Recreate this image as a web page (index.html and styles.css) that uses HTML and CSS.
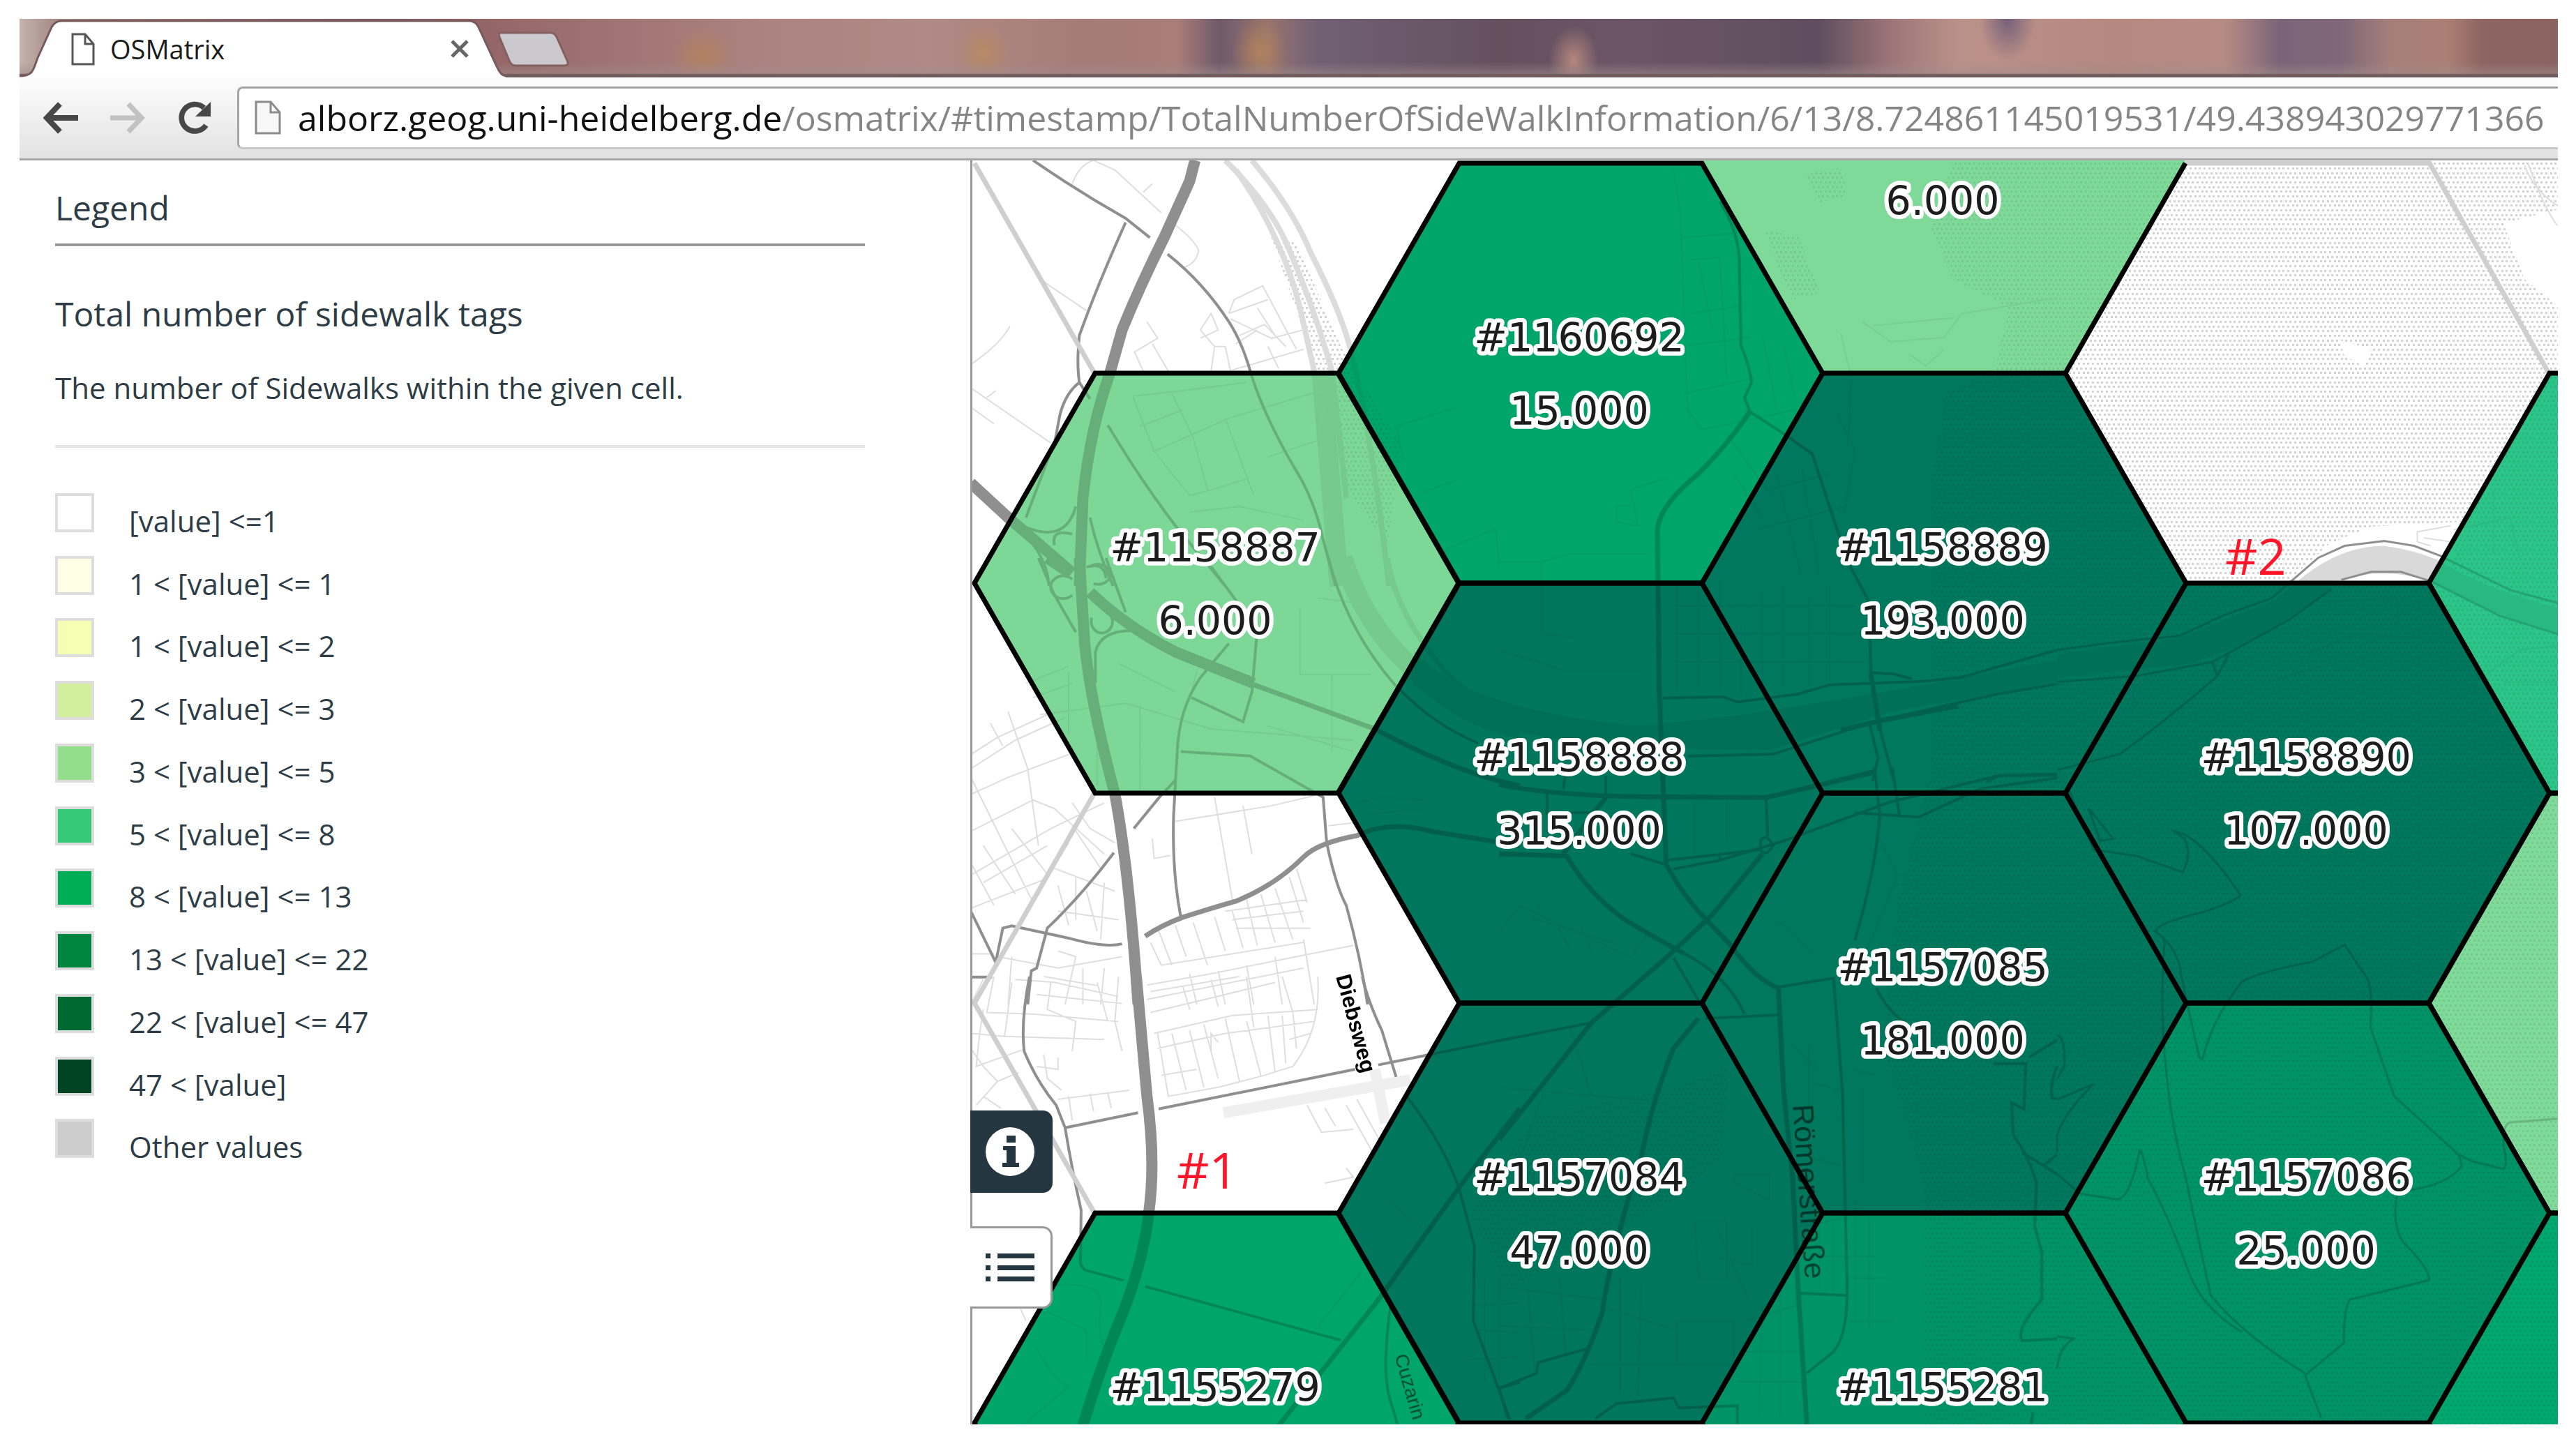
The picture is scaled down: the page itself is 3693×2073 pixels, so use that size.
FILE: index.html
```html
<!DOCTYPE html>
<html lang="en">
<head>
<meta charset="utf-8">
<title>OSMatrix</title>
<link rel="stylesheet" href="styles.css">
</head>
<body>
<div class="window">
  <header class="browser">
    <div class="tabstrip">
      <div class="tab">
        <svg class="tab-shape" viewBox="0 0 697 84" preserveAspectRatio="none" aria-hidden="true"><path d="M0 84V82C20 82 20 72 26 56L46 12Q51 3 60 3H644Q654 3 658 12L684 68Q690 82 697 82V84Z" fill="#fff"/><path d="M0 82C20 82 20 72 26 56L46 12Q51 3 60 3H644Q654 3 658 12L684 68Q690 82 697 82" fill="none" stroke="#775a5c" stroke-width="3"/></svg>
        <svg class="icon-page" viewBox="0 0 34 47" aria-hidden="true"><path d="M2 2H20L32 16V45H2ZM20 2V16H32" fill="#fff" stroke="#555" stroke-width="3"/></svg>
        <span class="tab-title">OSMatrix</span>
        <button class="tab-close" aria-label="Close tab"><svg viewBox="0 0 28 28"><path d="M3 3L25 25M25 3L3 25" stroke="#666" stroke-width="5"/></svg></button>
      </div>
      <button class="new-tab" aria-label="New tab"><svg viewBox="0 0 104 52"><path d="M5 2H76Q82 2 85 8L101 44Q102 49 96 49H26Q21 49 18 44L3 8Q1 2 5 2Z" fill="#cbc9cd" stroke="#83605f" stroke-width="3"/></svg></button>
    </div>
    <div class="toolbar">
      <button class="nav" aria-label="Back"><svg viewBox="0 0 50 44"><path d="M24 2L5 22L24 42M6 22H50" fill="none" stroke="#474747" stroke-width="8"/></svg></button>
      <button class="nav" aria-label="Forward" disabled><svg viewBox="0 0 50 44"><path d="M26 2L45 22L26 42M44 22H0" fill="none" stroke="#c2c2c2" stroke-width="7"/></svg></button>
      <button class="nav" aria-label="Reload"><svg viewBox="0 0 52 50"><path d="M43 36A20 20 0 1 1 40 10" fill="none" stroke="#474747" stroke-width="8"/><path d="M50 1V23H27Z" fill="#474747"/></svg></button>
      <div class="address">
        <svg class="icon-page" viewBox="0 0 38 50" aria-hidden="true"><path d="M2 2H23L36 17V47H2ZM23 2V17H36" fill="#f8f8f8" stroke="#8c8c8c" stroke-width="3"/></svg>
        <input class="url" type="text" aria-label="Address" value="alborz.geog.uni-heidelberg.de/osmatrix/#timestamp/TotalNumberOfSideWalkInformation/6/13/8.724861145019531/49.438943029771366">
      </div>
    </div>
  </header>
  <main class="content">
    <aside class="sidebar">
      <h1 class="heading">Legend</h1>
      <h2 class="subheading">Total number of sidewalk tags</h2>
      <p class="description">The number of Sidewalks within the given cell.</p>
      <ul class="legend">
        <li><i class="swatch c0"></i><span>[value] &lt;=1</span></li>
        <li><i class="swatch c1"></i><span>1 &lt; [value] &lt;= 1</span></li>
        <li><i class="swatch c2"></i><span>1 &lt; [value] &lt;= 2</span></li>
        <li><i class="swatch c3"></i><span>2 &lt; [value] &lt;= 3</span></li>
        <li><i class="swatch c4"></i><span>3 &lt; [value] &lt;= 5</span></li>
        <li><i class="swatch c5"></i><span>5 &lt; [value] &lt;= 8</span></li>
        <li><i class="swatch c6"></i><span>8 &lt; [value] &lt;= 13</span></li>
        <li><i class="swatch c7"></i><span>13 &lt; [value] &lt;= 22</span></li>
        <li><i class="swatch c8"></i><span>22 &lt; [value] &lt;= 47</span></li>
        <li><i class="swatch c9"></i><span>47 &lt; [value]</span></li>
        <li><i class="swatch other"></i><span>Other values</span></li>
      </ul>
    </aside>
    <section class="map" aria-label="Map">
      <svg class="canvas" viewBox="1395 230 2273 1812">
        <defs>
          <pattern id="dots" width="20" height="40" patternUnits="userSpaceOnUse">
            <path fill="#d2d2d2" d="M0 0h3v3h-3zM7 0h3v3h-3zM13 0h3v3h-3zM3 7h3v3h-3zM10 7h3v3h-3zM17 7h3v3h-3zM0 13h3v3h-3zM7 13h3v3h-3zM13 13h3v3h-3zM3 20h3v3h-3zM10 20h3v3h-3zM17 20h3v3h-3zM0 27h3v3h-3zM7 27h3v3h-3zM13 27h3v3h-3zM3 33h3v3h-3zM10 33h3v3h-3zM17 33h3v3h-3z"/>
          </pattern>
          <path id="hex" d="M-347 0L-174 -301H174L347 0L174 301H-174Z"/>
          <clipPath id="cells">
            <use href="#hex" x="2267" y="535"/><use href="#hex" x="2788" y="234"/><use href="#hex" x="1745" y="836"/><use href="#hex" x="2788" y="836"/><use href="#hex" x="2267" y="1137"/><use href="#hex" x="3309" y="1137"/><use href="#hex" x="3830" y="836"/><use href="#hex" x="2788" y="1438"/><use href="#hex" x="2267" y="1739"/><use href="#hex" x="3309" y="1739"/><use href="#hex" x="3830" y="1438"/><use href="#hex" x="1745" y="2040"/><use href="#hex" x="2788" y="2040"/><use href="#hex" x="3830" y="2040"/>
          </clipPath>
          <g id="basemap">
            <path fill="url(#dots)" d="M2800 230H3670V2042H2760V1700L2700 1500L2720 1300L2770 1100V700L2790 560L2860 535L2880 440L2800 400L2770 330Z"/>
            <path fill="url(#dots)" d="M2590 250L2640 240L2650 280L2610 290ZM2530 330L2580 340L2610 420L2570 430Z"/>
            <path fill="url(#dots)" d="M1820 330L1890 535L1930 700L1990 780L2010 640L1925 500L1860 350Z"/>
            <path fill="url(#dots)" d="M2400 1560L2480 1530L2470 1660L2400 1720L2160 1850L2110 1740L2200 1600Z"/>
            <path fill="#fff" d="M3590 320L3670 300V440L3620 400ZM3355 488L3400 500L3390 525L3362 510Z"/>
            <path fill="#fff" d="M3280 835L3340 780L3400 755L3530 748L3510 835Z"/>
            <g transform="translate(1380 220) scale(.5102 .3954)">
              <g class="rail"><path d="M740 25Q870 190 920 350Q990 560 1040 790Q1060 1000 1080 1250"/><path d="M815 25Q930 200 980 360Q1060 560 1090 700Q1150 1000 1200 1568"/><path d="M770 60Q900 300 950 560L990 790"/></g>
              <path class="rail band" d="M1010 790Q1030 1100 1060 1568"/>
              <path class="minor" d="M310 110Q330 40 370 25L430 60L560 215M600 260Q650 310 665 350Q660 400 620 415M510 140L535 110M230 465L350 570M25 765Q110 690 135 625M25 850L250 1050M70 885L95 860M25 920L90 980M520 610L550 670L485 720L510 790M535 690L580 790M670 640L710 700L700 790M710 700H740L755 790M670 640L700 580L720 640L670 670M750 580L765 530L845 480L940 710M750 580L860 530M755 600L870 670L960 640M780 660L850 620L910 700M830 560L880 660M760 785L960 710M770 690L830 640M860 700L890 780M480 880L620 860L800 830M480 880L540 1080L640 1240L700 1220L800 1180M540 1080L750 960L1010 860M590 870L650 1030L690 1220M740 960L820 1240M500 990L620 930M1220 990L1390 920M1220 990L1240 1110M1290 1230L1390 1185M640 1300L780 1280L960 1330M860 1100L1000 1040L1020 900M1370 1430L1500 1360L1510 1500"/>
              <path class="main" d="M200 25Q330 140 460 235L528 305M460 250Q380 480 330 660Q322 760 330 830Q290 870 275 950L262 1040L180 1320M330 830L360 890M578 365Q680 470 750 610Q790 690 815 810Q850 950 930 1130Q990 1250 1015 1400L1050 1568M410 985Q500 1180 600 1350L740 1568M170 1350Q290 1420 320 1280M190 1400Q240 1480 245 1568M360 1320Q380 1440 425 1568M260 1420Q250 1360 310 1380M350 1500Q400 1480 405 1540"/>
              <path class="motorway" d="M655 25L640 100L570 300Q500 480 450 640L415 800Q360 1000 340 1250L330 1568M25 1195L130 1320L310 1520"/>
            </g>
            <g transform="translate(1380 800) scale(.5102 .4082)">
              <path class="rail band" d="M1070 0Q1130 230 1260 380Q1400 560 1568 600"/>
              <path class="rail" d="M1195 0Q1220 200 1360 400Q1450 520 1568 550"/>
              <path class="minor" d="M25 690L100 630L240 550M25 740L150 640L290 560M25 830L130 770L300 690M80 580L115 660M130 540L185 740L215 1010M25 770L120 1010L200 1210M25 960L200 850L260 880L400 1040M30 1110L250 950L400 860M60 1140L240 1010M25 1070L90 1220M25 1230L230 1130L300 1000M60 1010L150 1180M140 950L240 1110M310 860L360 950L430 1000M310 940L390 1090M260 1090L430 1170M270 1150L300 1290M320 1120V1270M270 1240L440 1270M350 1170L380 1310M400 1140L390 1340M100 1400L270 1440L450 1400M150 1480L260 1490L440 1540M140 1400L130 1568M270 1380L320 1400L290 1568M340 1440V1568M400 1440L390 1568M25 1390H90M25 1568L60 1480M600 925L870 870L990 835M710 840L760 1200M790 870L815 1040M535 985L540 1055L585 1045M1030 940L1100 930M530 1350L560 1430L960 1350M550 1300L590 1430M600 1290L630 1400M650 1280L690 1430M710 1260L740 1380M760 1240L790 1370M740 1240L970 1200M760 1270L960 1240M770 1300L980 1300M800 1200L830 1360M840 1180L880 1350M880 1160L930 1340M920 1120L960 1280M940 1090L970 1210M520 1500L700 1460L1100 1360M520 1550L960 1440M640 1460L660 1568M720 1450L740 1568M800 1430L820 1568M880 1400L900 1568M960 1340L990 1568M180 440L300 380M200 490L310 440M220 550L460 510L700 600M300 400V620M380 560V800M500 520V820M440 370L600 470M950 180V410H1150M1000 140L1120 160M1040 410V680M860 590L1100 680M700 600L1100 640M660 400L640 490M1110 860L1180 840L1300 850M1140 900L1290 880"/>
              <path class="main" d="M700 30L830 250L815 470L790 575L645 490M750 300L670 420Q610 530 605 680L595 900Q590 1100 615 1260M615 680L810 695L1015 840L1025 1000Q1050 1150 1080 1220Q1120 1400 1140 1568M555 840L483 950M600 780L555 840M427 1035Q340 1180 240 1300L210 1440L195 1450L185 1568M25 1240L95 1420L115 1300L140 1292L300 1335Q400 1370 450 1355M25 1472H85M1030 0Q1080 250 1220 450Q1330 590 1450 650M215 0L260 130L320 260M405 0L460 190M375 440V330Q390 250 490 255M310 75A35 40 0 1 0 310 130M360 30A35 35 0 1 1 370 90M365 210A30 40 0 1 0 410 190"/>
              <path class="trunk" d="M515 1328Q560 1290 620 1262Q700 1230 770 1205Q880 1150 960 1050Q1000 1000 1110 975Q1200 920 1320 960L1568 1010M820 445L1160 600Q1400 760 1568 800"/>
              <path class="motorway" d="M330 0L345 300Q360 500 430 830Q470 1100 495 1568M240 0L300 50M360 120Q460 240 600 330L820 440"/>
            </g>
            <g transform="translate(1380 1400) scale(.5102 .4292)">
              <path class="minor" d="M90 0L70 120L200 125M140 20L120 200M25 190L120 200L400 210M60 110L50 190L40 300L170 245M200 125L440 150M250 20L240 110L320 150L310 250M380 20L410 150M440 0L430 150L450 250M210 60L450 90M230 0L380 30M25 240L60 300L100 350L40 430M100 350L160 320M60 400L110 440M230 260L240 340L280 380M270 270V310L210 300M270 410L470 380M300 400L310 480M360 390L370 450M410 390L420 440M530 50L780 0M530 120L880 20M620 30L640 110M700 10L720 100M800 0L820 170M900 0L930 120L940 240M540 190L760 130L1000 110M550 240L740 190L990 150M550 190L580 400L720 370L850 330L930 300Q1010 180 1000 0M590 190L630 380M640 180L680 370M680 160L720 340M740 140L780 350M800 150L840 330M860 130L880 320M720 220L700 190V250M900 130L910 290M560 330L660 310M920 210L980 190M970 430L1010 520L1100 510M1020 440L1050 500M1080 430L1160 600M1110 410L1180 560M1020 690L1100 670L1080 640M260 1030Q400 1020 390 1100Q380 1200 400 1240M240 1120L350 1180V1280M165 1110L180 1150M210 1240Q250 1340 300 1370L170 1500M1000 1170L1120 990M1170 720L1290 840M1440 1100L1568 1090M1440 1180L1568 1190M1420 1280L1568 1270M1470 1010V1350M1510 1000V1360"/>
              <path class="runway" d="M735 455L1260 345M1160 310L1190 490"/>
              <path class="main" d="M190 0Q165 150 175 250Q210 350 265 430L290 505Q310 650 335 780L333 960L345 980L455 1015M290 505L495 455M553 442L1105 310M1170 295L1568 200M1125 0Q1140 80 1180 180L1220 335M1250 400Q1360 570 1400 720L1440 900L1437 1150L1540 1480M1510 1375L1568 1355M1205 1100Q1180 1300 1200 1400L1225 1500M515 1035L1065 1215"/>
              <path class="trunk" d="M1568 440L1400 700L1170 1080L890 1500"/>
              <path class="motorway" d="M490 0Q505 200 520 400Q545 620 525 790Q510 950 450 1130Q390 1300 340 1500"/>
            </g>
            <g transform="translate(2150 220) scale(.5102 .574)">
              <path class="water" d="M-240 1240Q-100 1390 400 1430L700 1400L1050 1350L1568 1265V1320L1100 1395L960 1435L760 1490L400 1485Q0 1470 -240 1330Z"/>
              <path class="minor" d="M490 40L510 150L520 400L530 640L570 690M520 210L660 200M540 265L620 260L640 560M540 400L680 380M530 480L700 460M560 270L600 440M520 600L720 560M570 690L830 640M740 450L780 640M800 480L830 600M370 840L470 810M370 840L390 930L330 920V880H370M0 1020H120L200 1000H420M120 1020V1200L210 1208M0 1240L180 1290H400M500 1080V1340M560 1070V1340M620 1060V1340M680 1050V1350M740 1100V1340M800 1080V1330M870 1100V1330M930 1080V1320M490 1130H1000M490 1200H1020M490 1270H1030M720 940L980 880M760 840L930 800M780 800L850 1060M850 780L900 1050M950 650L1000 740L970 900M1020 420L1100 470L1250 460L1300 400L1568 360M1050 430L1280 410M960 450L990 560L980 740M1150 500L1200 530L1250 490M640 700L760 850M660 800L740 910"/>
              <path class="main" d="M620 120Q670 190 675 260L680 480Q700 520 710 570L690 610L705 645L800 700L880 750L980 1020L1040 1120L1045 1300L1065 1420L1110 1568M460 1360L630 1357L670 1370L840 1350L930 1327L1200 1318L1300 1308L1430 1275L1568 1240M1045 1297L1110 1300L1160 1312M530 1505L770 1500L980 1440L1100 1410L1400 1350L1568 1325M1040 1420L1065 1510L1050 1568M930 1568L1060 1540M1370 1568L1410 1553H1568"/>
              <path class="trunk" d="M705 645Q640 730 560 800Q450 880 445 940L450 1330L460 1568M960 1440L1080 1415L1290 1380M1045 1300L1070 1440"/>
            </g>
            <g transform="translate(2950 220) scale(.4739 .574)">
              <path class="water" d="M0 1250L370 1210L660 1115L740 1060Q860 980 990 980Q1080 990 1150 1015Q1300 1090 1515 1135V1195Q1300 1150 1130 1070Q1000 1030 860 1065Q740 1150 520 1240L400 1275L0 1310Z"/>
              <path class="minor" d="M1415 30Q1440 90 1513 130M1425 25Q1470 130 1513 180M1190 930L1090 945V970L1130 980M1110 960L1190 970M1200 940L1370 910L1400 1010M1320 840V1000M800 1120L1030 1110V1180M760 1250L900 1200L1100 1210M230 1340V1410L420 1380M640 1320L800 1280M1300 1300L1400 1240L1513 1230M1350 1320H1513"/>
              <path class="main thin" d="M0 1240L180 1220L370 1205L500 1155L650 1110L790 1010L870 980L990 968L1080 980L1160 1005L1370 1090L1515 1123M860 1065L950 1045H1040L1130 1068L1340 1155L1515 1200M0 1320L240 1305L470 1270L700 1165L830 1088M470 1270L485 1305Q340 1410 190 1500L0 1540M520 1250L485 1305"/>
            </g>
            <g transform="translate(2150 1100) scale(.5102 .6205)">
              <path class="minor" d="M0 380L60 320L370 440L420 380M100 350L340 410M160 360L200 420M230 370L260 430M120 310L90 360M550 60V200M640 70V170M0 740L420 770M130 740L60 900M200 600L260 760M660 940H760V1000L660 960ZM550 1050H640V1180H560ZM610 1060L700 1230M710 1060V1150L610 1130M500 1280H660V1380H500ZM0 1200L300 1230M0 1290L240 1300M80 1200L100 1390M170 1180L190 1380M340 1180V1450M400 1190L390 1450M300 1250L500 1300M260 1380H560M820 640L900 700M870 640V900L960 920M890 730L970 750M690 1280L850 1240M740 1240L730 1500M680 1350H860M670 1420H860M790 1220V1500M860 1060L980 1040M870 1130H1060M900 1060V1210M940 1050V1210M1000 1000V1280M1040 1040V1300M980 1180H1100M980 1280H1110M1000 700L1060 710M1020 740V960M1060 150L1120 250L1020 450M780 350L880 430"/>
              <path class="main" d="M135 60V110M180 50L190 0M300 20V70L260 105L130 105M0 632L260 590M750 70L755 160M740 190L470 215M490 235L620 215L800 170L1100 80L1400 20L1568 15M370 200L470 225M1055 0L1070 110Q1060 230 1000 400M1105 0L1125 110M1000 105L1180 115L1350 50L1568 25M490 440L565 545M580 580L785 572M785 508L940 487L965 750L978 1200Q980 1310 940 1350L865 1400M845 1215L975 1220M250 1343L110 1375L105 1400L0 1435L25 1505M270 1505L330 1470L490 1457L505 1480L670 1475V1520M1060 510Q1090 560 1140 590M1390 685H1480L1475 790L1440 775L1445 850Q1490 900 1510 960L1505 1060L1525 1120V1230Q1450 1300 1470 1325L1568 1320M1490 670L1568 630M1470 890L1530 920L1568 940M1530 920L1568 895M1568 690Q1545 740 1555 765H1568M1500 1490L1495 1520M520 430Q640 480 690 570M620 215V200M735 170Q750 150 770 180Q750 210 735 190Z"/>
              <path class="trunk" d="M0 40Q150 65 400 68L750 70L1060 10M460 20L470 225Q520 300 580 350L650 410Q720 490 785 510L800 750L825 950L840 1200L865 1520M0 200L190 205Q250 290 350 350Q450 400 520 430M0 860L260 590L470 440L600 340L740 200M300 70L180 200M560 580L490 650Q430 770 400 900Q360 1000 330 1100Q300 1200 290 1260Q240 1380 190 1440L75 1505"/>
            </g>
            <g transform="translate(2950 1100) scale(.4739 .6205)">
              <path class="main thin" d="M30 40L110 190L240 205L380 242Q410 200 385 165L355 148Q430 155 555 295Q540 310 440 335Q300 360 298 380Q370 420 375 480L430 670L440 675Q470 580 560 495Q620 470 770 450L870 410L940 490Q955 520 948 600L1020 760L1215 895L1255 910L1350 928Q1365 920 1352 880Q1345 820 1375 820L1513 812M1215 895L1225 920Q1180 970 1030 980Q1010 1060 1050 1100Q1130 1160 1125 1185L885 1230Q865 1260 868 1330L750 1405L800 1505M325 400Q310 560 330 700Q345 830 390 950Q430 1100 465 1220Q560 1310 750 1400M70 985L180 998Q220 1000 250 885Q260 890 275 950Q340 1040 400 1170Q440 1250 560 1305M95 95L170 165L130 170ZM0 620Q25 620 22 690L0 720M0 768L110 732Q20 800 0 850V890M0 940L70 985M0 1315L50 1320Q5 1340 0 1390"/>
            </g>
          </g>
        </defs>
        <use href="#basemap"/>
        <g class="cells">
          <use href="#hex" x="2267" y="535" fill="#00a56c"/><use href="#hex" x="2788" y="234" fill="#7fd999"/><use href="#hex" x="1745" y="836" fill="#7dd797"/><use href="#hex" x="2788" y="836" fill="#00785d"/><use href="#hex" x="2267" y="1137" fill="#00765c"/><use href="#hex" x="3309" y="1137" fill="#00785d"/><use href="#hex" x="3830" y="836" fill="#2bc588"/><use href="#hex" x="2788" y="1438" fill="#00785d"/><use href="#hex" x="2267" y="1739" fill="#00765c"/><use href="#hex" x="3309" y="1739" fill="#009365"/><use href="#hex" x="3830" y="1438" fill="#80da9a"/><use href="#hex" x="1745" y="2040" fill="#00a56c"/><use href="#hex" x="2788" y="2040" fill="#009365"/><use href="#hex" x="3830" y="2040" fill="#00a76e"/>
        </g>
        <g class="underlay" clip-path="url(#cells)"><use href="#basemap"/></g>
        <g class="outline-empty"><path d="M1398 234L1570 535M1570 1137L1398 1438L1570 1739M3134 234H3484L3655 535"/></g>
        <g class="streets">
          <text class="street dark" transform="translate(1916 1400) rotate(75)">Diebsweg</text>
          <text class="street large" transform="translate(2571 1584) rotate(86)">Römerstraße</text>
          <text class="street" transform="translate(2000 1944) rotate(74)">Cuzarin</text>
        </g>
        <g class="outline">
          <use href="#hex" x="2267" y="535"/><use href="#hex" x="1745" y="836"/><use href="#hex" x="2788" y="836"/><use href="#hex" x="2267" y="1137"/><use href="#hex" x="3309" y="1137"/><use href="#hex" x="3830" y="836"/><use href="#hex" x="2788" y="1438"/><use href="#hex" x="2267" y="1739"/><use href="#hex" x="3309" y="1739"/><use href="#hex" x="3830" y="1438"/><use href="#hex" x="1745" y="2040"/><use href="#hex" x="2788" y="2040"/><use href="#hex" x="3830" y="2040"/><path d="M3134 234L2962 535"/>
        </g>
        <g class="labels">
          <text x="2786" y="308">6.000</text>
          <text x="2265" y="504">#1160692</text><text x="2265" y="609">15.000</text>
          <text x="1743" y="805">#1158887</text><text x="1743" y="910">6.000</text>
          <text x="2786" y="805">#1158889</text><text x="2786" y="910">193.000</text>
          <text x="2265" y="1106">#1158888</text><text x="2265" y="1211">315.000</text>
          <text x="3307" y="1106">#1158890</text><text x="3307" y="1211">107.000</text>
          <text x="2786" y="1407">#1157085</text><text x="2786" y="1512">181.000</text>
          <text x="2265" y="1708">#1157084</text><text x="2265" y="1813">47.000</text>
          <text x="3307" y="1708">#1157086</text><text x="3307" y="1813">25.000</text>
          <text x="1743" y="2009">#1155279</text>
          <text x="2786" y="2009">#1155281</text>
        </g>
        <g class="notes"><text x="1688" y="1704">#1</text><text x="3191" y="824">#2</text></g>
      </svg>
      <nav class="panel-tabs">
        <button class="panel-tab active" aria-label="Information"><svg viewBox="0 0 70 70"><circle cx="35" cy="35" r="35" fill="#fff"/><path d="M30 12h13v10H30zM25 27h18v24h5v6H24v-6h6V33h-5z" fill="#243640"/></svg></button>
        <button class="panel-tab" aria-label="Legend"><svg viewBox="0 0 70 42"><path d="M0 1h7v7H0zM17 1h53v7H17zM0 18h7v7H0zM17 18h53v7H17zM0 34h7v7H0zM17 34h53v7H17z" fill="#243640"/></svg></button>
      </nav>
    </section>
  </main>
</div>
</body>
</html>
```
FILE: styles.css
```css
* { box-sizing: border-box; }

body {
  margin: 0;
  background: #fff;
  color: #2e3c46;
  font-family: "Open Sans", "Noto Sans", sans-serif;
}

button {
  margin: 0;
  padding: 0;
  border: 0;
  background: none;
}

svg { display: block; }

.window {
  margin: 27px 26px 31px 28px;
  overflow: hidden;
}

/* Browser frame */
.tabstrip {
  display: flex;
  height: 84px;
  background:
    linear-gradient(transparent 62px, rgba(160, 140, 140, 0.5) 78px, #6f5b5c 80px),
    radial-gradient(ellipse 46px 40px at 980px 52px, rgba(184, 132, 85, 0.7), transparent),
    radial-gradient(ellipse 40px 44px at 1382px 48px, rgba(187, 138, 92, 0.8), transparent),
    radial-gradient(ellipse 40px 48px at 1778px 46px, rgba(184, 134, 90, 0.8), transparent),
    radial-gradient(ellipse 36px 50px at 2228px 60px, #b5877f, transparent),
    radial-gradient(ellipse 40px 60px at 2850px 0, #75607a, transparent),
    linear-gradient(to right, #c4b3ac 0, #a08480 60px, #80565a 500px, #96686a 700px, #ab827f 1050px, #b08a86 1300px, #a57c78 1520px, #a97d79 1660px, #6f5a6b 1720px, #97746e 1790px, #716074 1860px, #64505f 2120px, #6b5567 2300px, #5f4e5f 2580px, #9b7477 2680px, #bb928a 2780px, #b58880 3000px, #b78c84 3160px, #7a6578 3240px, #80687a 3330px, #a67f7a 3400px, #ab7f74 3480px, #8d6562 3530px, #8a6360 3640px);
}

.tab {
  position: relative;
  display: flex;
  align-items: center;
  width: 697px;
  padding: 2px 52px 0 74px;
}

.tab-shape {
  position: absolute;
  inset: 0;
  width: 100%;
  height: 100%;
}

.tab .icon-page, .tab-title, .tab-close { position: relative; }

.tab .icon-page {
  width: 34px;
  height: 47px;
}

.tab-title {
  flex: 1;
  padding-left: 22px;
  color: #1c1c1c;
  font-size: 38px;
}

.tab-close svg {
  width: 28px;
  height: 28px;
}

.new-tab {
  align-self: flex-start;
  padding: 18px 0 0 0;
  margin-left: -12px;
}

.new-tab svg {
  width: 104px;
  height: 52px;
}

.toolbar {
  display: flex;
  align-items: center;
  gap: 46px;
  height: 119px;
  padding-left: 34px;
  border-bottom: 3px solid #a8a8a8;
  background: linear-gradient(#fdfdfd, #e2e2e2);
}

.nav svg {
  width: 50px;
  height: 50px;
}

.address {
  display: flex;
  flex: 1;
  align-items: center;
  gap: 24px;
  min-width: 0;
  height: 90px;
  margin-left: -10px;
  padding-left: 22px;
  border: solid #a5a5a5;
  border-width: 3px 0 3px 3px;
  border-bottom-color: #c8c8c8;
  border-radius: 8px 0 0 8px;
  background: #fff;
}

.address .icon-page {
  flex: none;
  width: 38px;
  height: 50px;
}

.url {
  flex: 1;
  min-width: 0;
  padding: 0;
  border: 0;
  outline: 0;
  background: linear-gradient(to right, #111 694px, #858585 694px);
  background-clip: text;
  -webkit-background-clip: text;
  color: transparent;
  font: 50px/76px "Open Sans", "Noto Sans", sans-serif;
}

/* Page */
.content {
  display: grid;
  grid-template-columns: 1363fr 2276fr;
}

.sidebar {
  padding: 34px 151px 0 51px;
}

.heading, .subheading, .description {
  margin: 0;
  font-weight: 400;
}

.heading {
  padding-bottom: 17px;
  border-bottom: 4px solid #999;
  font-size: 48px;
  line-height: 68px;
}

.subheading {
  margin-top: 61px;
  font-size: 48px;
  line-height: 72px;
}

.description {
  margin-top: 38px;
  padding-bottom: 50px;
  border-bottom: 4px solid #e5e5e5;
  font-size: 42px;
  line-height: 64px;
}

.legend {
  display: flex;
  flex-direction: column;
  min-height: 987px;
  margin: 65px 0 0;
  padding: 0;
  list-style: none;
  font-size: 42px;
  line-height: 60px;
}

.legend li {
  display: flex;
  flex: 1;
  align-items: flex-start;
  gap: 50px;
}

.legend span { padding-top: 10px; }

.swatch {
  width: 56px;
  height: 56px;
  border: 4px solid #ddd;
}

.c0 { background: #fff; }
.c1 { background: #ffffe5; }
.c2 { background: #f5ffb4; }
.c3 { background: #d1ef9d; }
.c4 { background: #93de8a; }
.c5 { background: #36c976; }
.c6 { background: #00ad57; }
.c7 { background: #00853e; }
.c8 { background: #006831; }
.c9 { background: #004424; }
.other { background: #ccc; }

/* Map */
.map {
  position: relative;
  border-left: 3px solid #999;
}

.canvas {
  width: 100%;
  height: auto;
}

.minor, .main, .trunk, .motorway, .rail, .runway {
  fill: none;
  stroke: #8f8f8f;
  vector-effect: non-scaling-stroke;
}

.rail path { vector-effect: non-scaling-stroke; }
.minor { stroke: #dedede; stroke-width: 2; }
.main { stroke-width: 4; }
.main.thin { stroke-width: 3; }
.trunk { stroke-width: 7; }
.motorway { stroke-width: 16; }
.rail { stroke: #dcdcdc; stroke-width: 8; }
.rail.band { stroke-width: 28; }
.runway { stroke: #efefef; stroke-width: 16; }
.water { fill: #d9d9d9; }

.underlay {
  opacity: 0.42;
  mix-blend-mode: multiply;
}

.outline, .outline-empty {
  fill: none;
  stroke: #000;
  stroke-width: 7;
}

.outline-empty { stroke: #cfcfcf; }

.street {
  fill: #000;
  fill-opacity: 0.55;
  font: 28px "Liberation Sans", sans-serif;
}

.street.dark { fill-opacity: 1; font-weight: 700; font-size: 31px; }
.street.large { font-size: 43px; }

.labels {
  fill: #1c1c1c;
  stroke: #fff;
  stroke-width: 12;
  stroke-linejoin: round;
  paint-order: stroke;
  font: 57px "DejaVu Sans", sans-serif;
  text-anchor: middle;
}

.notes {
  fill: #ff1428;
  font: 500 72px "Open Sans", "Noto Sans", sans-serif;
}

.panel-tabs {
  position: absolute;
  top: 1362px;
  left: -3px;
  display: flex;
  flex-direction: column;
  gap: 48px;
}

.panel-tab {
  display: flex;
  align-items: center;
  width: 118px;
  height: 118px;
  padding-left: 22px;
  border: 3px solid #999;
  border-left: 0;
  border-radius: 0 14px 14px 0;
  background: #fff;
}

.panel-tab.active {
  border-color: #243640;
  background: #243640;
}

.panel-tab svg { width: 70px; }
```
